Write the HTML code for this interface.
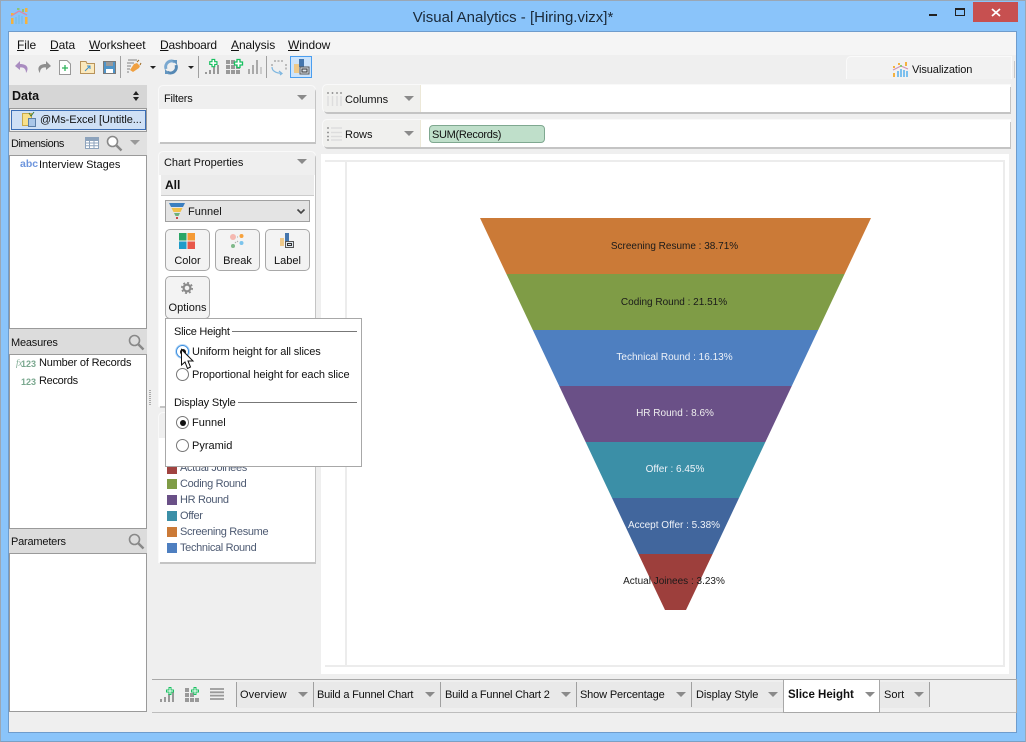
<!DOCTYPE html>
<html><head><meta charset="utf-8"><style>
html,body{margin:0;padding:0}
body{width:1026px;height:742px;overflow:hidden;position:relative;background:#8ac4fa;font:11px "Liberation Sans",sans-serif;color:#111}
.a,.t{position:absolute}
.t{white-space:nowrap;line-height:14px;letter-spacing:-.2px;margin-top:1px}
.m{font-size:12px;letter-spacing:-.07px;margin-top:0}
.tri{position:absolute;width:0;height:0;border-left:5px solid transparent;border-right:5px solid transparent;border-top:5px solid #8a8a8a}
svg{position:absolute;overflow:visible}
u{text-decoration:underline}
.btn{position:absolute;background:#f3f3f3;border:1px solid #a8a8a8;border-radius:5px;box-sizing:border-box}
.sep{position:absolute;width:1px;background:#a0a0a0}
.hdr{position:absolute;background:#dcdcdc;left:9px;width:138px}
.list{position:absolute;left:9px;width:138px;background:#fff;border:1px solid #9a9a9a;box-sizing:border-box}
.panel{position:absolute;background:#fff;box-shadow:1px 2px 0 #c4c4c4,0 0 0 1px #f9f9f9;border-radius:4px 4px 0 0}
.sw{position:absolute;left:167px;width:10px;height:10px}
.lg{color:#4d5a72;letter-spacing:-.33px}
.radio{position:absolute;width:13px;height:13px;border:1px solid #777;border-radius:50%;background:#fff;box-sizing:border-box}
.dot{position:absolute;left:2.5px;top:2.5px;width:6px;height:6px;border-radius:50%;background:#111}
.fl{font-size:10px;position:absolute;white-space:nowrap;line-height:12px;transform:translateX(-50%);margin-top:1px}
</style></head><body>
<div class="a" style="left:0;top:0;width:1026px;height:742px;box-sizing:border-box;border:1px solid #9aa7b5;border-bottom-color:#7aa0c4"></div>

<svg style="left:11px;top:8px" width="17" height="16" viewBox="0 0 17 16">
<path d="M0 8L8 3L16 7" stroke="#d98aa8" stroke-width="1.4" fill="none"/>
<path d="M0 10h2.5v6H0zM0 5h2.5v2H0zM14 0h2.5v4H14zM14 9h2.5v7H14z" fill="#f4b23f"/><path d="M6 0h2.5v2H6z" fill="#8cc47a"/><path d="M4 9h2v7H4zM7 7h2v9H7zM10 8h2v8h-2z" fill="#7dc0ee"/><path d="M11 1h2v3h-2z" fill="#8cc47a"/>
</svg>
<div class="t" style="left:313px;width:400px;text-align:center;top:9px;font-size:15px;line-height:17px;letter-spacing:0;color:#1b2a3a;margin-top:0">Visual Analytics - [Hiring.vizx]*</div>
<div class="a" style="left:929px;top:14px;width:8px;height:2px;background:#222"></div>
<div class="a" style="left:955px;top:8px;width:10px;height:8px;border:1px solid #222;border-top-width:2px;box-sizing:border-box"></div>
<div class="a" style="left:973px;top:2px;width:45px;height:20px;background:#c75050"></div>
<svg style="left:992px;top:9px" width="8" height="7"><path d="M0 0L8 7M8 0L0 7" stroke="#fff" stroke-width="1.8"/></svg>

<!-- client -->
<div class="a" style="left:8px;top:31px;width:1009px;height:702px;background:#efefef;border:1px solid #6f9ccc;box-sizing:border-box"></div>
<div class="a" style="left:9px;top:32px;width:1007px;height:23px;background:#f5f5f5"></div>

<div class="t m" style="left:17px;top:38px"><u>F</u>ile</div>
<div class="t m" style="left:50px;top:38px"><u>D</u>ata</div>
<div class="t m" style="left:89px;top:38px"><u>W</u>orksheet</div>
<div class="t m" style="left:160px;top:38px;letter-spacing:-.2px"><u>D</u>ashboard</div>
<div class="t m" style="left:231px;top:38px"><u>A</u>nalysis</div>
<div class="t m" style="left:288px;top:38px"><u>W</u>indow</div>

<!-- toolbar -->
<svg style="left:14px;top:59px" width="16" height="16" viewBox="0 0 16 16"><path d="M6 2L1 7L6 11V8.5C10 8 12 10 12 14C15 10 14 5 6 5Z" fill="#a98cc0"/></svg>
<svg style="left:36px;top:59px" width="16" height="16" viewBox="0 0 16 16"><path d="M10 2L15 7L10 11V8.5C6 8 4 10 4 14C1 10 2 5 10 5Z" fill="#8e8e8e"/></svg>
<svg style="left:59px;top:60px" width="12" height="15" viewBox="0 0 12 15"><path d="M.5.5H8L11.5 4V14.5H.5Z" fill="#fff" stroke="#999"/><path d="M6 5V11M3 8H9" stroke="#2fb35a" stroke-width="1.3"/></svg>
<svg style="left:80px;top:61px" width="15" height="13" viewBox="0 0 15 13"><path d="M.5 12.5V.5H6L7 2.5H14.5V12.5Z" fill="#fbe9bd" stroke="#b8935a"/><path d="M5 10L10 5M7 5H10V8" stroke="#3a90d0" fill="none"/></svg>
<svg style="left:103px;top:61px" width="13" height="13" viewBox="0 0 13 13"><rect x=".5" y=".5" width="12" height="12" fill="#4f94c8" stroke="#7a7a7a"/><rect x="3" y="1" width="7" height="4" fill="#9a9a9a"/><rect x="3" y="8" width="7" height="4" fill="#fff"/></svg>
<div class="sep" style="left:120px;top:56px;height:22px"></div>
<svg style="left:125px;top:59px" width="17" height="16" viewBox="0 0 17 16"><path d="M3 1H12M2 4H9M2 7H6M2 10H5M2 13H4" stroke="#999" stroke-width="1.2"/><path d="M5 11L9 5L12 4L15 7L14 9L8 13Z" fill="#f0a040"/><path d="M12 3L14 1M15 6L16 4" stroke="#a06a20"/></svg>
<div class="tri" style="left:150px;top:66px;border-top-color:#222;border-left-width:3.5px;border-right-width:3.5px;border-top-width:3.5px"></div>
<svg style="left:164px;top:60px" width="14" height="14" viewBox="0 0 14 14"><path d="M11 2A6 6 0 0 0 2 9" fill="none" stroke="#7aa8d0" stroke-width="3"/><path d="M3 12A6 6 0 0 0 12 5" fill="none" stroke="#5588b4" stroke-width="3"/><path d="M8 0H13V5ZM6 14H1V9Z" fill="#6496c0"/></svg>
<div class="tri" style="left:188px;top:66px;border-top-color:#222;border-left-width:3.5px;border-right-width:3.5px;border-top-width:3.5px"></div>
<div class="sep" style="left:198px;top:56px;height:22px"></div>
<svg style="left:204px;top:59px" width="16" height="16" viewBox="0 0 16 16"><path d="M1 13h2v2H1zM5 11h2v4H5zM9 8h2v7H9zM13 6h2v9h-2z" fill="#999"/><path d="M7.5 3H10V.5H13V3H15.5V6H13V8.5H10V6H7.5Z" fill="#fff" stroke="#18c060" stroke-width="1.3" transform="translate(-1 0) scale(.9)"/></svg>
<svg style="left:226px;top:59px" width="16" height="16" viewBox="0 0 16 16"><path d="M0 1h4v4H0zM5 1h4v4H5zM0 6h4v4H0zM5 6h4v4H5zM10 6h4v4h-4zM0 11h4v4H0zM5 11h4v4H5zM10 11h4v4h-4z" fill="#999"/><path d="M8.5 3H11V.5H14V3H16.5V6H14V8.5H11V6H8.5Z" fill="#fff" stroke="#18c060" stroke-width="1.3"/></svg>
<svg style="left:248px;top:59px" width="15" height="16" viewBox="0 0 15 16"><path d="M0 10h2v5H0zM4 6h2v9H4zM8 1h2v14H8z" fill="#aaa"/><path d="M12 8h2v7h-2z" fill="#ccc"/></svg>
<div class="sep" style="left:266px;top:56px;height:22px"></div>
<svg style="left:271px;top:59px" width="16" height="16" viewBox="0 0 16 16"><path d="M3 2H13M15 5V12M1 5V8" stroke="#888" stroke-dasharray="2 1.5" fill="none"/><path d="M1 8C1 12 5 14 11 14.5M8 12L11 14.5L9 16" stroke="#7fb7e0" stroke-width="1.2" fill="none"/></svg>
<div class="a" style="left:290px;top:56px;width:22px;height:22px;background:#cde4fb;border:1px solid #4a9ef0;box-sizing:border-box"></div>
<svg style="left:293px;top:59px" width="17" height="17" viewBox="0 0 17 17"><rect x="1" y="5" width="5" height="9" fill="#eec98a"/><rect x="6" y="0" width="5" height="8" fill="#4576ad"/><rect x="7" y="8" width="9" height="7" fill="#dfe6ee" stroke="#555"/><rect x="9" y="10" width="5" height="3" fill="none" stroke="#333"/></svg>

<!-- Visualization tab -->
<div class="a" style="left:846px;top:56px;width:166px;height:23px;background:#f2f2f2;border:1px solid #fafafa;border-bottom:0;border-radius:5px 0 0 0;box-sizing:border-box"></div>
<div class="a" style="left:1014px;top:61px;width:1px;height:17px;background:#c8c8c8"></div>
<svg style="left:893px;top:62px" width="16" height="15" viewBox="0 0 16 15"><path d="M0 8L8 4L15 7" stroke="#d294b4" stroke-width="1.2" fill="none"/><path d="M0 4h2v2H0zM0 11h2v4H0zM5 1h2v2H5zM12 0h2v4h-2z" fill="#f4b23f"/><path d="M4 9h2v6H4zM7 7h2v8H7zM10 8h2v7h-2zM13 9h2v6h-2z" fill="#7dc0ee"/><path d="M7 3h2v2H7z" fill="#8cc47a"/></svg>
<div class="t" style="left:912px;top:62px;letter-spacing:-.1px">Visualization</div>

<!-- Left data pane -->
<div class="hdr" style="top:85px;height:23px;background:#d6d6d6"></div>
<div class="t" style="left:12px;top:89px;font-weight:bold;font-size:12.5px;letter-spacing:0;margin-top:0">Data</div>
<div class="a" style="left:133px;top:91px;width:0;height:0;border-left:3px solid transparent;border-right:3px solid transparent;border-bottom:4px solid #222"></div>
<div class="a" style="left:133px;top:97px;width:0;height:0;border-left:3px solid transparent;border-right:3px solid transparent;border-top:4px solid #222"></div>
<div class="a" style="left:9px;top:108px;width:138px;height:24px;background:#efefef;border:1px solid #999;box-sizing:border-box"></div>
<div class="a" style="left:11px;top:110px;width:135px;height:20px;background:#cfe0f5;border:1px solid #3b6eb5;box-sizing:border-box"></div>
<svg style="left:22px;top:112px" width="14" height="15" viewBox="0 0 14 15"><rect x=".5" y="1.5" width="9" height="12" fill="#f8e08a" stroke="#c9a94a"/><rect x="6.5" y="6.5" width="7" height="8" fill="#a9c6e8" stroke="#5a7ea8"/><path d="M7 1L9 4L12 0" stroke="#3a7a3a" fill="none"/></svg>
<div class="t" style="left:40px;top:112px;letter-spacing:-.05px">@Ms-Excel [Untitle...</div>

<div class="hdr" style="top:132px;height:23px;background:#e1e1e1"></div>
<div class="t" style="left:11px;top:136px;letter-spacing:-.45px">Dimensions</div>
<svg style="left:85px;top:137px" width="14" height="12" viewBox="0 0 14 12"><path d="M.5.5H13.5V11.5H.5ZM.5 3.5H13.5M.5 6H13.5M.5 8.7H13.5M4.5 3.5V11.5M9 3.5V11.5" fill="#fff" stroke="#8da3bc"/><rect x="0" y="0" width="14" height="3" fill="#8da3bc"/></svg>
<svg style="left:106px;top:135px" width="17" height="17" viewBox="0 0 17 17"><circle cx="6.5" cy="6.5" r="5" fill="#fff" stroke="#888" stroke-width="1.6"/><path d="M10.5 10.5L15.5 15.5" stroke="#888" stroke-width="2.4"/></svg>
<div class="tri" style="left:130px;top:140px;border-top-color:#999"></div>
<div class="list" style="top:155px;height:174px"></div>
<div class="t" style="left:20px;top:156px;font-size:10.5px;color:#6d95dd;font-weight:bold;letter-spacing:0">abc</div>
<div class="t" style="left:39px;top:157px;letter-spacing:0">Interview Stages</div>

<div class="hdr" style="top:329px;height:25px;background:#dcdcdc"></div>
<div class="t" style="left:11px;top:335px;letter-spacing:-.2px">Measures</div>
<svg style="left:128px;top:334px" width="17" height="17" viewBox="0 0 17 17"><circle cx="6.5" cy="6.5" r="5" fill="#ddd" stroke="#888" stroke-width="1.6"/><path d="M10.5 10.5L15.5 15.5" stroke="#888" stroke-width="2.4"/></svg>
<div class="list" style="top:354px;height:175px"></div>
<div class="t" style="left:16px;top:355px;font-size:9px;color:#7aa88f;font-style:italic;font-family:'Liberation Serif',serif;letter-spacing:0">fx</div>
<div class="t" style="left:21px;top:356px;font-size:9px;color:#7aa88f;font-weight:bold;letter-spacing:0">123</div>
<div class="t" style="left:39px;top:355px;letter-spacing:-.18px">Number of Records</div>
<div class="t" style="left:21px;top:374px;font-size:9px;color:#7aa88f;font-weight:bold;letter-spacing:0">123</div>
<div class="t" style="left:39px;top:373px;letter-spacing:-.3px">Records</div>

<div class="hdr" style="top:529px;height:24px;background:#dcdcdc"></div>
<div class="t" style="left:11px;top:534px">Parameters</div>
<svg style="left:128px;top:533px" width="17" height="17" viewBox="0 0 17 17"><circle cx="6.5" cy="6.5" r="5" fill="#ddd" stroke="#888" stroke-width="1.6"/><path d="M10.5 10.5L15.5 15.5" stroke="#888" stroke-width="2.4"/></svg>
<div class="list" style="top:553px;height:159px"></div>

<div class="a" style="left:149px;top:390px;width:2px;height:15px;background:repeating-linear-gradient(#aaa 0 1px,transparent 1px 2px)"></div>

<!-- Filters -->
<div class="panel" style="left:159px;top:86px;width:156px;height:56px"></div>
<div class="a" style="left:159px;top:86px;width:156px;height:23px;background:#efefef;border-radius:4px 4px 0 0"></div>
<div class="t" style="left:164px;top:91px">Filters</div>
<div class="tri" style="left:297px;top:95px;border-top-color:#8a8a8a"></div>

<!-- Chart properties -->
<div class="panel" style="left:159px;top:152px;width:156px;height:254px;background:#fff"></div>
<div class="a" style="left:159px;top:152px;width:156px;height:23px;background:#efefef;border-radius:4px 4px 0 0"></div>
<div class="t" style="left:164px;top:155px;letter-spacing:-.05px">Chart Properties</div>
<div class="tri" style="left:297px;top:159px"></div>
<div class="a" style="left:161px;top:175px;width:153px;height:21px;background:#ebebeb;border-bottom:1px solid #ccc;box-sizing:border-box"></div>
<div class="t" style="left:165px;top:178px;font-weight:bold;font-size:12px;letter-spacing:0;margin-top:0">All</div>
<div class="a" style="left:165px;top:200px;width:145px;height:22px;background:#e4e4e4;border:1px solid #a0a0a0;box-sizing:border-box"></div>
<svg style="left:169px;top:203px" width="16" height="16" viewBox="0 0 16 16"><path d="M0 0H16L14 4H2Z" fill="#3b7fc0"/><path d="M2.5 5H13.5L11.5 9H4.5Z" fill="#f0c04a"/><path d="M5 10H11L9.5 13H6.5Z" fill="#6fb07a"/><path d="M7 14H9V16H7Z" fill="#c94a4a"/></svg>
<div class="t" style="left:188px;top:204px;letter-spacing:0">Funnel</div>
<svg style="left:297px;top:209px" width="8" height="6"><path d="M.5.5L4 4L7.5.5" stroke="#444" stroke-width="1.6" fill="none"/></svg>

<div class="btn" style="left:165px;top:229px;width:45px;height:42px"></div>
<svg style="left:179px;top:233px" width="16" height="16"><rect width="7.5" height="7.5" fill="#2aa565"/><rect x="8.5" width="7.5" height="7.5" fill="#f59a35"/><rect y="8.5" width="7.5" height="7.5" fill="#1f9bc9"/><rect x="8.5" y="8.5" width="7.5" height="7.5" fill="#e8574a"/></svg>
<div class="t" style="left:165px;width:45px;text-align:center;top:253px;letter-spacing:0">Color</div>
<div class="btn" style="left:215px;top:229px;width:45px;height:42px"></div>
<svg style="left:229px;top:233px" width="16" height="16"><circle cx="4" cy="4" r="3" fill="#f5b8b0"/><circle cx="12.5" cy="3" r="2" fill="#f7a23c"/><circle cx="12.5" cy="10" r="2" fill="#7cc4ec"/><circle cx="4" cy="13" r="2" fill="#7fb98a"/><path d="M8 4h1M8 8l1 1M6 10l1-1" stroke="#aaa"/></svg>
<div class="t" style="left:215px;width:45px;text-align:center;top:253px;letter-spacing:0">Break</div>
<div class="btn" style="left:265px;top:229px;width:45px;height:42px"></div>
<svg style="left:279px;top:233px" width="16" height="16" viewBox="0 0 16 16"><rect x="1" y="5" width="4" height="8" fill="#eec98a"/><rect x="6" y="0" width="4" height="8" fill="#4576ad"/><rect x="6.5" y="8.5" width="8" height="6" fill="#dfe6ee" stroke="#555"/><rect x="8.5" y="10.5" width="4" height="2" fill="none" stroke="#333"/></svg>
<div class="t" style="left:265px;width:45px;text-align:center;top:253px;letter-spacing:0">Label</div>
<div class="btn" style="left:165px;top:276px;width:45px;height:43px"></div>
<svg style="left:181px;top:282px" width="12" height="12" viewBox="0 0 12 12"><circle cx="6" cy="6" r="3.4" fill="none" stroke="#8a8a8a" stroke-width="2.2"/><circle cx="6" cy="6" r="5.2" fill="none" stroke="#8a8a8a" stroke-width="1.6" stroke-dasharray="2 2.08"/></svg>
<div class="t" style="left:165px;width:45px;text-align:center;top:300px;letter-spacing:0">Options</div>

<!-- Lower legend panel -->
<div class="panel" style="left:159px;top:413px;width:156px;height:149px"></div>
<div class="a" style="left:159px;top:413px;width:156px;height:25px;background:#efefef;border-radius:4px 4px 0 0"></div>
<div class="sw" style="top:464px;background:#a04340"></div><div class="t lg" style="left:180px;top:460px">Actual Joinees</div>
<div class="sw" style="top:479px;background:#7f9c46"></div><div class="t lg" style="left:180px;top:476px">Coding Round</div>
<div class="sw" style="top:495px;background:#6a5087"></div><div class="t lg" style="left:180px;top:492px">HR Round</div>
<div class="sw" style="top:511px;background:#3b8fa7"></div><div class="t lg" style="left:180px;top:508px">Offer</div>
<div class="sw" style="top:527px;background:#cb7a37"></div><div class="t lg" style="left:180px;top:524px">Screening Resume</div>
<div class="sw" style="top:543px;background:#4e7fc0"></div><div class="t lg" style="left:180px;top:540px">Technical Round</div>

<!-- shelves -->
<div class="panel" style="left:323px;top:85px;width:687px;height:27px;border-radius:4px 0 0 4px"></div>
<div class="a" style="left:323px;top:85px;width:98px;height:27px;background:#f0f0ee;border-right:1px solid #ece8d8;box-sizing:border-box;border-radius:4px 0 0 4px"></div>
<svg style="left:327px;top:92px" width="15" height="14"><path d="M1 0v2M5.5 0v2M10 0v2M14 0v2" stroke="#999" stroke-width="1.5"/><path d="M1 4v10M5.5 4v10M10 4v10M14 4v10" stroke="#ddd" stroke-width="1.5"/></svg>
<div class="t" style="left:345px;top:92px;letter-spacing:-.05px">Columns</div>
<div class="tri" style="left:404px;top:96px"></div>

<div class="panel" style="left:323px;top:120px;width:687px;height:27px;border-radius:4px 0 0 4px"></div>
<div class="a" style="left:323px;top:120px;width:98px;height:27px;background:#f0f0ee;border-right:1px solid #ece8d8;box-sizing:border-box;border-radius:4px 0 0 4px"></div>
<svg style="left:327px;top:127px" width="15" height="14"><path d="M0 1h2M0 5.5h2M0 9.5h2M0 13h2" stroke="#999" stroke-width="1.5"/><path d="M4 1h11M4 5.5h11M4 9.5h11M4 13h11" stroke="#ddd" stroke-width="1.5"/></svg>
<div class="t" style="left:345px;top:127px;letter-spacing:0">Rows</div>
<div class="tri" style="left:404px;top:131px"></div>
<div class="a" style="left:429px;top:125px;width:116px;height:18px;background:#bfdfca;border:1px solid #7fa890;border-radius:4px;box-sizing:border-box"></div>
<div class="t" style="left:432px;top:127px;letter-spacing:-.3px">SUM(Records)</div>

<!-- chart -->
<div class="a" style="left:321px;top:154px;width:688px;height:520px;background:#fff"></div>
<div class="a" style="left:325px;top:160px;width:680px;height:2px;background:#ececec"></div>
<div class="a" style="left:345px;top:162px;width:2px;height:504px;background:#ececec"></div>
<div class="a" style="left:1003px;top:162px;width:2px;height:504px;background:#ececec"></div>
<div class="a" style="left:325px;top:665px;width:680px;height:2px;background:#ececec"></div>
<svg style="left:0;top:0" width="1026" height="742">
<polygon points="480,218 871,218 844.6,274 506.4,274" fill="#cb7a37"/>
<polygon points="506.4,274 844.6,274 818.2,330 532.8,330" fill="#7f9c46"/>
<polygon points="532.8,330 818.2,330 791.8,386 559.2,386" fill="#4e7fc0"/>
<polygon points="559.2,386 791.8,386 765.4,442 585.6,442" fill="#6a5087"/>
<polygon points="585.6,442 765.4,442 739,498 612,498" fill="#3b8fa7"/>
<polygon points="612,498 739,498 712.6,554 638.4,554" fill="#41669d"/>
<polygon points="638.4,554 712.6,554 686,610 665,610" fill="#9d3f3c"/>
</svg>
<div class="fl" style="left:674.5px;top:240px;color:#1a1a1a">Screening Resume : 38.71%</div>
<div class="fl" style="left:674px;top:296px;color:#1a1a1a">Coding Round : 21.51%</div>
<div class="fl" style="left:674.5px;top:351px;color:#eef2f8">Technical Round : 16.13%</div>
<div class="fl" style="left:675px;top:407px;color:#eee">HR Round : 8.6%</div>
<div class="fl" style="left:675px;top:463px;color:#eef2f8">Offer : 6.45%</div>
<div class="fl" style="left:674px;top:519px;color:#eef2f8">Accept Offer : 5.38%</div>
<div class="fl" style="left:674px;top:575px;color:#1a1a1a">Actual Joinees : 3.23%</div>

<!-- tab bar -->
<div class="a" style="left:152px;top:679px;width:864px;height:1px;background:#a8a8a8"></div>
<div class="a" style="left:152px;top:712px;width:864px;height:1px;background:#bdbdbd"></div>
<div class="a" style="left:1016px;top:679px;width:1px;height:34px;background:#a8a8a8"></div>
<div class="a" style="left:237px;top:682px;width:692px;height:26px;background:#e9e9e9"></div>
<svg style="left:160px;top:687px" width="15" height="15" viewBox="0 0 15 15"><path d="M0 12h2v3H0zM4 10h2v5H4zM8 7h2v8H8zM12 5h2v10h-2z" fill="#999"/><path d="M6.5 3H9V.5H11V3H13.5V5H11V7.5H9V5H6.5Z" fill="#fff" stroke="#18c060"/></svg>
<svg style="left:185px;top:687px" width="15" height="15" viewBox="0 0 15 15"><path d="M0 1h4v4H0zM0 6h4v4H0zM5 6h4v4H5zM0 11h4v4H0zM5 11h4v4H5zM10 11h4v4h-4z" fill="#999"/><path d="M6.5 3H9V.5H11V3H13.5V5H11V7.5H9V5H6.5Z" fill="#fff" stroke="#18c060"/></svg>
<svg style="left:210px;top:688px" width="14" height="12"><path d="M0 1h14M0 4.3h14M0 7.6h14M0 11h14" stroke="#999" stroke-width="1.8"/></svg>
<div class="sep" style="left:236px;top:682px;height:25px"></div>
<div class="t" style="left:240px;top:687px;letter-spacing:.1px">Overview</div><div class="tri" style="left:298px;top:692px"></div>
<div class="sep" style="left:313px;top:682px;height:25px"></div>
<div class="t" style="left:317px;top:687px;letter-spacing:-.2px">Build a Funnel Chart</div><div class="tri" style="left:425px;top:692px"></div>
<div class="sep" style="left:440px;top:682px;height:25px"></div>
<div class="t" style="left:445px;top:687px;letter-spacing:-.22px">Build a Funnel Chart 2</div><div class="tri" style="left:561px;top:692px"></div>
<div class="sep" style="left:576px;top:682px;height:25px"></div>
<div class="t" style="left:580px;top:687px;letter-spacing:-.15px">Show Percentage</div><div class="tri" style="left:676px;top:692px"></div>
<div class="sep" style="left:691px;top:682px;height:25px"></div>
<div class="t" style="left:696px;top:687px;letter-spacing:-.1px">Display Style</div><div class="tri" style="left:768px;top:692px"></div>
<div class="a" style="left:783px;top:680px;width:97px;height:33px;background:#fff;border:1px solid #a8a8a8;border-top:0;box-sizing:border-box"></div>
<div class="t" style="left:788px;top:687px;font-weight:bold;font-size:11.5px;letter-spacing:0">Slice Height</div><div class="tri" style="left:865px;top:692px"></div>
<div class="t" style="left:884px;top:687px;letter-spacing:0">Sort</div><div class="tri" style="left:914px;top:692px"></div>
<div class="sep" style="left:929px;top:682px;height:25px"></div>

<!-- popup (on top) -->
<div class="a" style="left:165px;top:318px;width:197px;height:149px;background:#fff;border:1px solid #a8a8a8;box-sizing:border-box"></div>
<div class="t" style="left:174px;top:324px;letter-spacing:-.25px">Slice Height</div>
<div class="a" style="left:232px;top:331px;width:125px;height:1px;background:#777"></div>
<div class="radio" style="left:176px;top:345px;border-color:#3c8fe0;box-shadow:0 0 0 1px #b9d9f7"><div class="dot"></div></div>
<div class="t" style="left:192px;top:344px;letter-spacing:-.12px">Uniform height for all slices</div>
<div class="radio" style="left:176px;top:368px"></div>
<div class="t" style="left:192px;top:367px;letter-spacing:-.08px">Proportional height for each slice</div>
<div class="t" style="left:174px;top:395px;letter-spacing:-.15px">Display Style</div>
<div class="a" style="left:238px;top:402px;width:119px;height:1px;background:#777"></div>
<div class="radio" style="left:176px;top:416px"><div class="dot"></div></div>
<div class="t" style="left:192px;top:415px;letter-spacing:0">Funnel</div>
<div class="radio" style="left:176px;top:439px"></div>
<div class="t" style="left:192px;top:438px;letter-spacing:0">Pyramid</div>
<svg style="left:181px;top:349px" width="13" height="21" viewBox="0 0 13 21"><path d="M.5.5V16L4 13L6.5 19.5L9.5 18L7 12H12Z" fill="#fff" stroke="#111"/></svg>
</body></html>
